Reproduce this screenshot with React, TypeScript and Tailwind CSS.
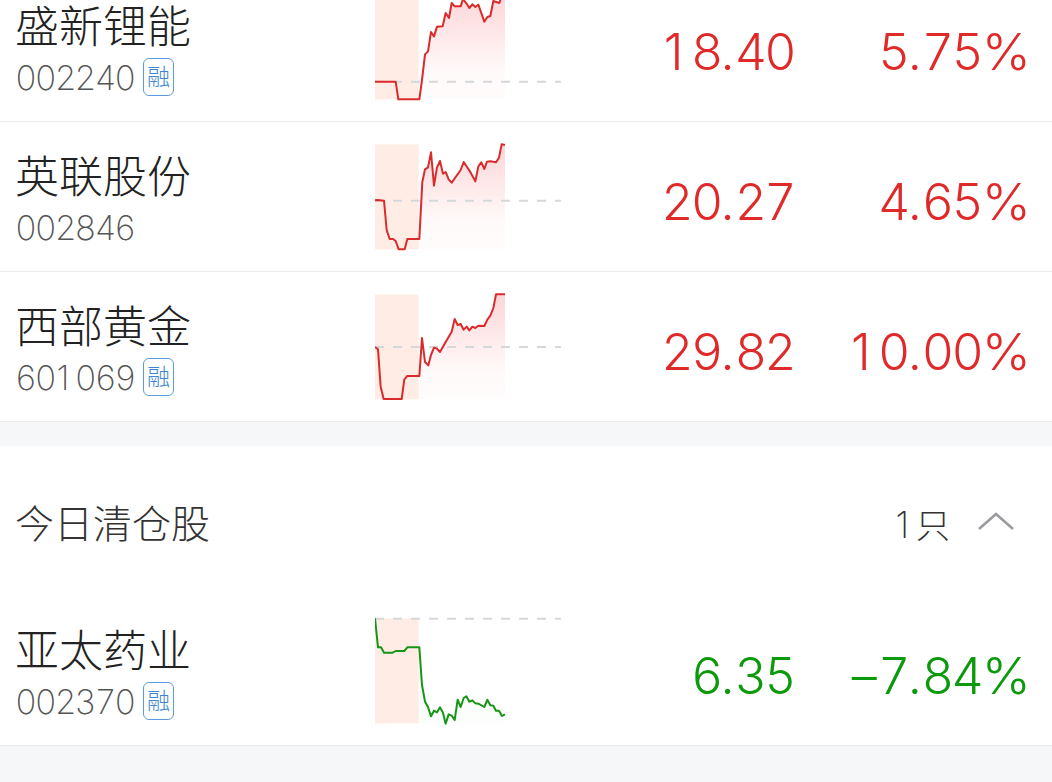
type Stock = {
  name: string;
  code: string;
  margin: boolean;
  price: string;
  change: string;
  up: boolean;
  baseline: number;
  points: string;
};

const HOLDINGS: Stock[] = [
  {
    name: "盛新锂能",
    code: "002240",
    margin: true,
    price: "18.40",
    change: "5.75%",
    up: true,
    baseline: 269,
    points:
      "0,269 62,269 70,322 133,322 141,264 150,187 159,178 168,120 177,133 186,104 203,103 212,63 222,78 230,33 239,43 257,43 264,21 274,34 283,48 292,37 301,45 310,38 328,89 337,75 346,72 355,27 373,33 382,7 390,7",
  },
  {
    name: "英联股份",
    code: "002846",
    margin: false,
    price: "20.27",
    change: "4.65%",
    up: true,
    baseline: 176,
    points:
      "0,175 8,174 27,176 35,264 44,291 54,291 62,297 71,322 89,322 97,291 133,291 142,119 150,82 159,76 168,31 177,131 186,76 195,57 204,95 212,90 221,112 230,122 257,84 266,60 283,85 301,118 310,73 319,61 328,81 336,59 346,58 363,61 372,47 380,7 390,9",
  },
  {
    name: "西部黄金",
    code: "601069",
    margin: true,
    price: "29.82",
    change: "10.00%",
    up: true,
    baseline: 165,
    points:
      "0,165 9,172 17,284 26,321 80,321 88,262 97,252 133,252 141,138 150,210 160,220 168,189 177,167 186,170 195,180 212,150 230,119 239,81 248,99 257,96 266,113 275,104 283,115 292,104 301,108 310,101 328,102 337,83 346,71 355,48 363,7 390,7",
  },
];

const CLEARED: Stock[] = [
  {
    name: "亚太药业",
    code: "002370",
    margin: true,
    price: "6.35",
    change: "–7.84%",
    up: false,
    baseline: 8,
    points:
      "0,7 9,94 18,94 27,110 53,110 62,105 88,105 97,94 133,94 141,207 150,257 159,273 168,301 177,284 186,289 195,274 204,290 212,323 221,295 230,299 239,312 248,251 257,273 266,246 274,241 283,257 292,253 301,262 310,263 328,273 337,251 346,268 355,269 363,284 372,284 381,300 390,295",
  },
];

function Sparkline({ stock }: { stock: Stock }) {
  const id = `area-${stock.code}`;
  const color = stock.up ? "#d92b2b" : "#159615";
  const area = stock.up ? "#f5303c" : "#20c020";
  // only the regular session is filled, the first 131 units are the opening auction
  const session = stock.points.split(" ").filter((p) => parseInt(p) >= 133);

  return (
    <svg className="mt-5 h-[110px] w-[186px] shrink-0" viewBox="0 0 558 330" fill="none">
      <defs>
        <linearGradient id={id} gradientUnits="userSpaceOnUse" x1="0" y1="7" x2="0" y2="321">
          <stop offset="0" stopColor={area} stopOpacity={stock.up ? 0.2 : 0.04} />
          <stop offset="0.75" stopColor={area} stopOpacity={0.025} />
          <stop offset="1" stopColor={area} stopOpacity={0.015} />
        </linearGradient>
      </defs>
      <rect x="0" y="7" width="131" height="315" fill="#ffede5" />
      <polygon points={`133,321 ${session.join(" ")} 390,321`} fill={`url(#${id})`} />
      <line x1="0" x2="558" y1={stock.baseline} y2={stock.baseline} stroke="#d5d7da" strokeWidth="6" strokeDasharray="27 27" />
      <polyline points={stock.points} stroke={color} strokeWidth="6" strokeLinejoin="round" />
    </svg>
  );
}

// Inter's tabular "1" gets a foot serif, so that digit stays proportional in a cell of digit width
function Digits({ value }: { value: string }) {
  return (
    <span className="tabular-nums">
      {value.split(/(1|–)/).map((part, i) => {
        if (part === "1") {
          return (
            <span key={i} className="inline-block w-[0.592em] pl-[0.05em] text-left normal-nums">
              1
            </span>
          );
        }
        if (part === "–") {
          return (
            <span key={i} className="mr-1">
              –
            </span>
          );
        }
        return part;
      })}
    </span>
  );
}

function Figure({ value }: { value: string }) {
  const [whole, rest] = value.split(".");
  return (
    <>
      <span className="tracking-[-2.7px]">
        <Digits value={whole} />
      </span>
      .
      <span className="tracking-[-2.7px]">
        <Digits value={rest.replace("%", "")} />
      </span>
      {rest.endsWith("%") && <span className="-mr-[3px] ml-[3px] inline-block origin-right scale-x-105">%</span>}
    </>
  );
}

function StockRow({ stock }: { stock: Stock }) {
  const tone = stock.up ? "text-[#e02a2a]" : "text-[#0c9a0c]";

  return (
    <div className="flex h-[150px] border-b border-[#ebebed] pr-6 pl-[15px]">
      <div className="w-[360px] shrink-0 pt-7">
        <div className="h-[52px] text-[44px] leading-[55px] font-light text-[#222]">{stock.name}</div>
        <div className="flex h-[50px] items-center">
          <span className="w-[120px] text-[34px] font-extralight tracking-[-2.1px] text-[#555]">
            <Digits value={stock.code} />
          </span>
          {stock.margin && (
            <span className="ml-2 flex h-[38px] w-[31px] items-center justify-center rounded-[6px] border border-[#5c9bdd] text-[23px] font-light text-[#3d85d2]">
              融
            </span>
          )}
        </div>
      </div>
      <Sparkline stock={stock} />
      <div className={`flex h-40 flex-1 items-center text-[50px] font-[270] ${tone}`}>
        <span className="w-[233px] text-right">
          <Figure value={stock.price} />
        </span>
        <span className="flex-1 text-right">
          <Figure value={stock.change} />
        </span>
      </div>
    </div>
  );
}

export default function App() {
  return (
    <div className="h-[782px] w-[1052px] overflow-hidden bg-[#f6f7f9] font-[Inter,'Noto_Sans_CJK_SC',sans-serif]">
      <div className="-mt-7 bg-white">
        {HOLDINGS.map((s) => (
          <StockRow key={s.code} stock={s} />
        ))}
      </div>
      <div className="mt-6 bg-white">
        <div className="flex h-[150px] items-center pr-[38px] pl-[15px] text-[#333]">
          <span className="flex-1 pt-[7px] text-[39px] font-light">今日清仓股</span>
          <span className="pt-[7px] text-[34px] font-extralight">
            <span className="mr-px text-[36px]">
              <Digits value="1" />
            </span>
            只
          </span>
          <svg className="ml-7 h-5 w-9" viewBox="0 0 36 20" fill="none" stroke="#999a9e" strokeWidth="2.5">
            <path d="M1 18 18 3l17 15" />
          </svg>
        </div>
        {CLEARED.map((s) => (
          <StockRow key={s.code} stock={s} />
        ))}
      </div>
    </div>
  );
}
